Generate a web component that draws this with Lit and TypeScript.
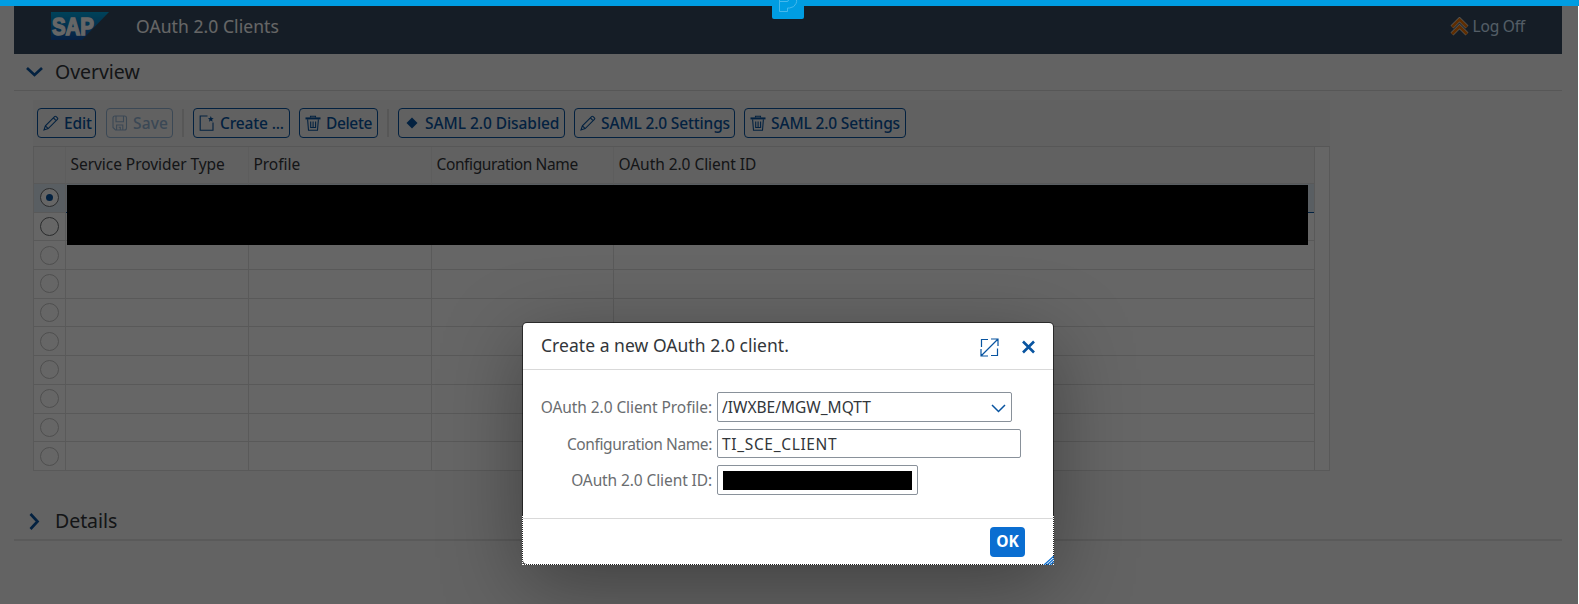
import { LitElement, html, svg, css } from "lit";
import { customElement } from "lit/decorators.js";

const pencil = svg`<path d="M1 15l1.400-4.200L11.600 1.600q.8-.7 1.600 0l1.200 1.200q.8.8 0 1.600L5.200 13.600zM2.400 10.800l2.800 2.800M10.400 2.900l2.700 2.700"/>`;
const trash = svg`<path d="M5.500 2.600V1.300h5v1.300M2.600 4.400l.9 10.800h9l.9-10.800M5.700 6.500v6h4.900v-6M8.100 6.500v6"/><path d="M.5 2.400h15v2H.5z" class="solid"/>`;
const icons: Record<string, unknown> = {
  edit: pencil,
  trash,
  save: svg`<path d="M3 1h9.500q2 0 2 2v10q0 2-2 2H3.500L1 12.500V3q0-2 2-2zM4 1.200v5.600h7.500V1.200M4.600 15v-5h6.200v5M6.700 12.300h1.600V15"/>`,
  create: svg`<path d="M8.500 1H1.200v14.300h12.800V7.500"/><path class="solid" d="M11.800 1l.8 2 2.100.2-1.600 1.400.5 2.100-1.800-1.100L10 6.700l.5-2.100-1.600-1.400 2.100-.2z"/>`,
  diamond: svg`<path class="solid" d="M8 2.500l5.500 5.500L8 13.500 2.500 8z"/>`,
};

const tools = [
  { icon: "edit", label: "Edit", cls: "b-edit" },
  { icon: "save", label: "Save", cls: "b-save disabled" },
  null,
  { icon: "create", label: "Create ...", cls: "b-create" },
  { icon: "trash", label: "Delete", cls: "b-delete" },
  null,
  { icon: "diamond", label: "SAML 2.0 Disabled", cls: "b-saml" },
  { icon: "edit", label: "SAML 2.0 Settings", cls: "b-set" },
  { icon: "trash", label: "SAML 2.0 Settings", cls: "b-set2" },
];

@customElement("app-root")
export class AppRoot extends LitElement {
  static styles = css`
    :host { display: block; position: relative; width: 1579px; height: 604px; overflow: hidden; background: #f7f7f7;
      font: 15.5px/20px "Noto Sans", sans-serif; color: #32363a; }
    * { box-sizing: border-box; }
    svg { display: block; fill: none; flex: none; }
    .page { padding: 6px 17px 0 14px; }
    .shell { height: 48px; background: #354a5f; display: flex; align-items: flex-start; padding: 6px 37px 0; }
    .title { font-size: 17.5px; letter-spacing: .07px; color: #fff; margin: 4px 0 0 27px; }
    .logoff { margin: 5px 0 0 auto; display: flex; gap: 4px; color: #d1e8ff; letter-spacing: -.2px; }
    .logoff span { margin-top: -1px; }
    .section { height: 37px; border-bottom: 1px solid #d9d9d9; display: flex; align-items: center; gap: 12px; padding: 0 0 1px 12px;
      font-size: 19.500px; letter-spacing: -.05px; }
    .section svg { stroke: #0854a0; stroke-width: 2.700; }
    .details { margin-top: 30px; height: 40px; border-bottom: 2px solid #e0e0e0; padding-top: 2px; padding-bottom: 0; }
    .panel { width: 1297px; margin: 9px 0 0 19px; }
    .toolbar { height: 47px; background: #f2f2f2; padding: 8px 4px 0; display: flex; border-bottom: 1px solid #d9d9d9; }
    .btn { height: 30px; border: 1px solid #0854a0; border-radius: 4px; color: #0854a0; font-weight: 500; display: flex; align-items: center;
      padding: 0 0 1px 5px; gap: 5px; white-space: nowrap; margin-right: 10px; letter-spacing: -.15px; }
    .btn svg { stroke: currentColor; stroke-width: 1.100; margin-top: 1px; }
    .btn .solid { fill: currentColor; stroke: none; }
    .disabled { color: #94b4d4; border-color: #94b4d4; letter-spacing: .15px; }
    .b-edit { width: 59px; } .b-save { width: 67px; margin-right: 9px; }
    .b-create { width: 97px; margin-right: 9px; letter-spacing: -.15px; }
    .b-delete { width: 79px; margin-right: 9px; letter-spacing: -.35px; }
    .b-saml { width: 167px; margin-right: 9px; letter-spacing: -.06px; } .b-set { width: 161px; margin-right: 9px; } .b-set2 { width: 162px; }
    .sep { width: 2px; height: 28px; margin: 1px 9px 0 0; background: #d9d9d9; }
    .body { display: flex; height: 324px; border: 1px solid #dedede; border-top: 0; background: #fff; }
    .table { width: 1281px; border-right: 1px solid #dedede; }
    .row { display: grid; grid-template-columns: 32px 183px 183px 182px 1fr; height: 28.700px; }
    .row > div { border-right: 1px solid #e0e0e0; border-bottom: 1px solid #dedede; display: flex; align-items: center; }
    .row > div:first-child { justify-content: center; }
    .row > div:last-child { border-right: 0; }
    .head { height: 37px; background: #f2f2f2; }
    .head > div { padding: 0 0 2px 4.500px; border-right-color: #e8e8e8; letter-spacing: -.05px; }
    .head .cfg, .cfg { letter-spacing: -.39px; }
    .radio { width: 19px; height: 19px; border: 1px solid #c4c4c4; border-radius: 50%; display: flex; align-items: center; justify-content: center; }
    .on { border-color: #6a6d70; }
    .dot { width: 7px; height: 7px; border-radius: 50%; background: #0854a0; }
    .sel > div { background: #dfeaf5; }
    .sel > div + div { border-bottom-color: #0854a0; }
    .sel .radio { background: #fff; }
    .redact { position: absolute; left: 67px; top: 185px; width: 1241px; height: 60px; background: #000; }
    .overlay { position: absolute; inset: 0 1px 0 0; background: rgba(0,0,0,.6); }
    .edge { position: absolute; right: 0; top: 6px; bottom: 0; width: 1px; background: #fff; }
    .top { position: absolute; left: 0; top: 0; width: 100%; height: 6px; background: #009de2; }
    .tab { position: absolute; left: 772px; top: 0; width: 32px; height: 19px; border-radius: 0 0 2px 2px; background: #009de2; }
    .dialog { position: absolute; left: 523px; top: 323px; width: 530px; height: 241px; background: #fff; border-radius: 4px;
      box-shadow: 0 0 0 1px rgba(0,0,0,.55), 0 20px 80px rgba(0,0,0,.36); }
    .dh { height: 47px; border-bottom: 1px solid #d9d9d9; display: flex; align-items: center; padding: 0 17px 0 18px; }
    .dt { font-size: 17.500px; letter-spacing: .04px; margin: 0 auto 2px 0; }
    .dh svg { stroke: #0854a0; margin-top: 2px; }
    .full { margin-right: 22px; stroke-width: 1.200; }
    .form { height: 148px; padding-top: 22px; display: grid; grid-template-columns: 189px auto; column-gap: 5px; grid-template-rows: 30px 29px 30px; row-gap: 7px; justify-items: start; }
    .lb { justify-self: end; align-self: center; color: #6a6d70; }
    .lb1 { letter-spacing: -.08px; }
    .lb3 { letter-spacing: -.1px; }
    .in { height: 100%; border: 1px solid #89919a; border-radius: 2px; padding: 0 5px; display: flex; align-items: center; }
    .w1 { width: 295px; justify-content: space-between; padding: 0 5px 1px 4px; } .w2 { width: 304px; letter-spacing: .66px; padding-left: 4px; } .w3 { width: 201px; }
    .w1 svg { stroke: #0854a0; stroke-width: 1.500; margin-top: 3px; }
    .bar { width: 189px; height: 19px; background: #000; margin-top: 1px; }
    .df { height: 46px; border-top: 1px solid #d9d9d9; padding: 8px 28px 0; display: flex; justify-content: flex-end; }
    .ok { width: 35px; height: 30px; border-radius: 4px; background: #0a6ed1; color: #fff; font-weight: 700; font-size: 15.500px; letter-spacing: -.1px; padding-bottom: 2px; display: flex; align-items: center; justify-content: center; }
    .focus { position: absolute; left: -1px; right: -1px; bottom: -1px; height: 49px; border: 1px dotted #fff; border-top: 0; }
    .grip { position: absolute; right: -1px; bottom: -1px; stroke: #0a6ed1; stroke-width: 1.300; }
  `;

  render() {
    return html`
      <div class="page">
        <div class="shell">
          <svg width="58" height="28" viewBox="0 0 58 28">
            <defs><linearGradient id="g" x1="0" y1="0" x2="0" y2="1"><stop offset="0" stop-color="#00a6e0"/><stop offset="1" stop-color="#1450a8"/></linearGradient></defs>
            <path d="M0 0h58L31 28H0z" fill="url(#g)"/>
            <text x="1" y="23" textLength="42" lengthAdjust="spacingAndGlyphs" font-family="Liberation Sans, sans-serif" font-weight="700" font-size="23.500" fill="#fff" stroke="#fff" stroke-width="1.400">SAP</text>
          </svg>
          <div class="title">OAuth 2.0 Clients</div>
          <div class="logoff">
            <svg width="19" height="19" viewBox="0 0 19 19"><path d="M2 10l7.500-7.500L17 10M2 17l7.500-7.500L17 17" stroke="#d8d2c8" stroke-width="4.200"/><path d="M2 10l7.500-7.500L17 10M2 17l7.500-7.500L17 17" stroke="#ee7200" stroke-width="2.600"/></svg>
            <span>Log Off</span>
          </div>
        </div>
        <div class="section"><svg width="17" height="10" viewBox="0 0 17 10"><path d="M1 1l7.500 7L16 1"/></svg><span>Overview</span></div>
        <div class="panel">
          <div class="toolbar">
            ${tools.map((t) => t
              ? html`<div class="btn ${t.cls}"><svg width="16" height="16" viewBox="0 0 16 16">${icons[t.icon]}</svg><span>${t.label}</span></div>`
              : html`<div class="sep"></div>`)}
          </div>
          <div class="body">
            <div class="table">
              <div class="row head"><div></div><div>Service Provider Type</div><div>Profile</div><div class="cfg">Configuration Name</div><div>OAuth 2.0 Client ID</div></div>
              ${Array.from({ length: 10 }, (_, i) => html`<div class="row ${i === 0 ? "sel" : ""}">
                <div><span class="radio ${i < 2 ? "on" : ""}">${i === 0 ? html`<i class="dot"></i>` : ""}</span></div><div></div><div></div><div></div><div></div>
              </div>`)}
            </div>
          </div>
        </div>
        <div class="section details"><svg width="17" height="17" viewBox="0 0 17 17"><path d="M4.500 1l7 7.500-7 7.500"/></svg><span>Details</span></div>
      </div>
      <div class="redact"></div>
      <div class="overlay"></div>
      <div class="edge"></div>
      <div class="dialog">
        <div class="dh">
          <div class="dt">Create a new OAuth 2.0 client.</div>
          <svg class="full" width="19" height="19" viewBox="0 0 19 19"><path d="M1.500 9V1.500H8M11 1h7v7M17.500 1.500l-16 16M1 11v7h7M17.500 10.500v7H11"/></svg>
          <svg width="15" height="14" viewBox="0 0 15 14" stroke-width="2.600"><path d="M2 1.500l11 11M13 1.500l-11 11"/></svg>
        </div>
        <div class="form">
          <span class="lb lb1">OAuth 2.0 Client Profile:</span>
          <div class="in w1"><span>/IWXBE/MGW_MQTT</span><svg width="15" height="9" viewBox="0 0 15 9"><path d="M1 1l6.500 6.500L14 1"/></svg></div>
          <span class="lb cfg">Configuration Name:</span>
          <div class="in w2">TI_SCE_CLIENT</div>
          <span class="lb lb3">OAuth 2.0 Client ID:</span>
          <div class="in w3"><div class="bar"></div></div>
        </div>
        <div class="df"><div class="ok">OK</div></div>
        <div class="focus"></div>
        <svg class="grip" width="11" height="9" viewBox="0 0 11 9"><path d="M1 9L11 0M4 9l7-6.300M7 9l4-3.600"/></svg>
      </div>
      <div class="top"></div>
      <div class="tab"><svg width="32" height="19" viewBox="0 0 32 19" stroke="#45b8ec" stroke-width="1"><path d="M7.500 0v11.500h8V8h2q5-.5 6.500-4.500 1-2 .5-3.500M7.500 1.500H15q1.500 0 1.500-1.500"/></svg></div>
    `;
  }
}
